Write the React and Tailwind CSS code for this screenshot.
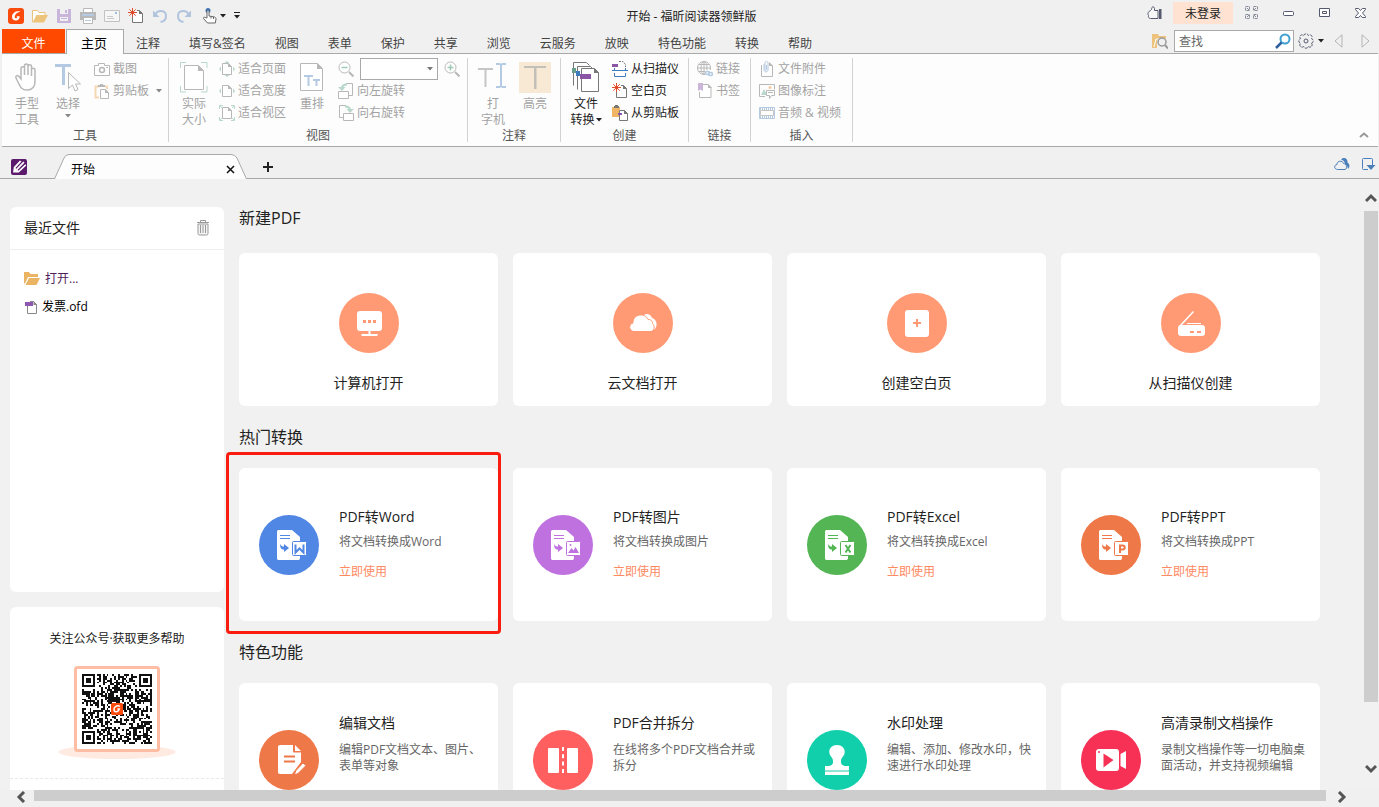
// src/App.jsx
import React from "react";

const GREY = "#b8b8b8";
const GREEN = "#b9d8cb";
const BLUE = "#b4c9e2";

function Svg({ w = 16, h = 16, children, className = "" }) {
  return (
    <svg
      width={w}
      height={h}
      viewBox={`0 0 ${w} ${h}`}
      fill="none"
      aria-hidden="true"
      className={`shrink-0 ${className}`}
    >
      {children}
    </svg>
  );
}

function Caret({ color = "#222", className = "" }) {
  return (
    <Svg w={6} h={4} className={className}>
      <path d="M0 0h6L3 3.5z" fill={color} />
    </Svg>
  );
}

/* ---------- title bar icons ---------- */

const LogoIcon = () => (
  <Svg>
    <rect width="16" height="16" rx="3" fill="#fb4a0c" />
    <path
      d="M12.6 3.6c-3.6-1.4-8.2.6-8.6 4.8-.3 3 2.2 4.4 4.6 4 1.8-.3 2.8-1.7 3.2-4.2H8.4c1 .2 1 1.9-.3 2-1.3.1-1.8-1-1.2-2.4.8-2 3-3.6 5.7-4.2z"
      fill="#fff"
    />
  </Svg>
);
const OpenIcon = () => (
  <Svg>
    <path d="M.5 14V2.5h5l1.5 2h6V7" fill="#fff" stroke="#eac27c" />
    <path d="M.5 14.5 4.5 7H16l-4 7.5z" fill="#eec47c" />
  </Svg>
);
const SaveIcon = () => (
  <Svg>
    <path d="M1 1h14v14H1z" fill="#c9b5dc" />
    <path d="M4 1h8v5H4zM4 9h8v4H4z" fill="#f0f0f0" />
    <path d="M9 2h2v3H9zM5 10h6v1H5z" fill="#c9b5dc" />
  </Svg>
);
const PrintIcon = () => (
  <Svg>
    <path d="M3.5 4V.5h9V4" stroke="#b8b8b8" fill="#fff" />
    <path d="M0 4h16v8H0z" fill="#b8b8b8" />
    <path d="M2 6h12v2H2z" fill="#b4c9e2" />
    <path d="M3.5 9.5h9v6h-9z" fill="#fff" stroke="#b8b8b8" />
    <path d="M5 12.5h6" stroke="#b4c9e2" />
  </Svg>
);
const MailIcon = () => (
  <Svg>
    <path d="M.5 2.5h15v11H.5z" fill="#f6f6f6" stroke="#c2c2c2" />
    <path d="M11 4h2v2h-2z" fill="#9fbbe0" />
    <path d="M3 8.5h6M3 10.5h7" stroke="#c9c9c9" />
  </Svg>
);
const NewIcon = () => (
  <Svg>
    <path d="M9 2.5h2.5l3 3v9h-10V9" fill="#fff" stroke="#777" />
    <path d="M11 2v4h4z" fill="#777" />
    <path d="M4.5 0v9M0 4.5h9M1.3 1.3l6.4 6.4M7.7 1.3 1.3 7.7" stroke="#dd4b2a" />
  </Svg>
);
const UndoIcon = ({ flip }) => (
  <Svg className={flip ? "-scale-x-100" : ""}>
    <path d="M3 7c2-5.5 11-5.5 11 1 0 3-2 5.5-5.5 6" stroke="#b0c4dc" strokeWidth="2" />
    <path d="M1 2.5V9h6.5z" fill="#b0c4dc" />
  </Svg>
);
const TouchIcon = () => (
  <Svg>
    <circle cx="6" cy="2.5" r="2.5" fill="#3c74b4" />
    <path
      d="M5 10V3.5c0-1.3 2-1.3 2 0V8l5.5 1c1 .3 1.5 1 1.5 2l-.7 4H5.5l-4-4.5c-.5-1 .8-1.7 1.5-1z"
      fill="#fff"
      stroke="#666"
    />
    <path d="M9 8.5v2M11.5 9v2" stroke="#666" />
  </Svg>
);
const LikeIcon = () => (
  <Svg>
    <path
      d="M11 13.5H3.5C2 13.5 1 12 1.5 10.5.5 9 1 7.5 2 6.5c1-.8 2-1 2.5-2 .3-1 0-2 1-2.5 1.3-.5 2 .5 2 1.5v2H11z"
      fill="#f7f7f7"
      stroke="#555a70"
    />
    <path d="M12 4h2.5v10H12z" fill="#555a70" />
  </Svg>
);
const GridIcon = () => (
  <Svg w={14} h={14}>
    {["M.5.5h4v4h-4z", "M8.5.5h4v4h-4z", "M.5 8.5h4v4h-4z", "M8.5 8.5h4v4h-4z"].map((d) => (
      <path key={d} d={d} stroke="#8a8d9b" strokeDasharray="3 1" />
    ))}
    <path d="m2 2 2 2m7-2L9 4M2 11l2-2m7 2L9 9" stroke="#8a8d9b" />
  </Svg>
);
const MinIcon = () => (
  <Svg w={12} h={12}>
    <rect x=".5" y="4.5" width="10" height="4" rx="1" fill="#fff" stroke="#555a70" />
  </Svg>
);
const MaxIcon = () => (
  <Svg w={12} h={12}>
    <path d="M.5 1.5h10v8H.5z" fill="#fff" stroke="#555a70" />
    <path d="M3.5 4.5h4v2h-4z" stroke="#555a70" />
  </Svg>
);
const CloseIcon = () => (
  <Svg w={12} h={12}>
    <path
      d="M.5 1.5h3.2l1.8 2 1.8-2h3.2v1l-3 3.5 3 3.5v1H7.3l-1.8-2-1.8 2H.5v-1l3-3.5-3-3.5z"
      fill="#fff"
      stroke="#555a70"
    />
  </Svg>
);

/* ---------- ribbon icons ---------- */

const HandIcon = () => (
  <Svg w={26} h={30}>
    <path
      d="M7 17V6.5c0-2.4 3.5-2.4 3.5 0V13 4c0-2.6 3.5-2.6 3.5 0v9V4.5c0-2.4 3.5-2.4 3.5 0V14 8c0-2.2 3.5-2.2 3.5 0v11c0 5-2 9-8 9-5 0-6.5-2.5-8-6l-3-6c-1-2 1.5-3.3 2.7-1.7z"
      fill="#fff"
      stroke={GREY}
      strokeWidth="1.5"
    />
  </Svg>
);
const SelectIcon = () => (
  <Svg w={26} h={30}>
    <path d="M0 2h16v3H0zM7 4h3v19H7z" fill={BLUE} />
    <path d="M13.5 10.5v16l4-3.5 2.5 6 3-1.5-2.5-5.5h5z" fill="#fff" stroke={GREY} />
  </Svg>
);
const CameraIcon = () => (
  <Svg>
    <path d="M.5 4.5h4v-2h6v2h5v10H.5z" fill="#fff" stroke={GREY} />
    <circle cx="8" cy="9" r="2.5" stroke={GREY} strokeWidth="1.5" />
    <path d="M12 6h2v1h-2z" fill={GREY} />
  </Svg>
);
const ClipIcon = () => (
  <Svg>
    <path d="M5 3.5H1.5v11H5M11 3.5h2V6" stroke="#f5d9b4" strokeWidth="2" />
    <path d="M4 4V2h2V1h3v1h2v2z" fill={GREY} />
    <path d="M6.5 6.5h5l3 3v6h-8z" fill="#fff" stroke={GREY} />
    <path d="M11 6v4h4z" fill={GREY} />
  </Svg>
);
const ActualIcon = () => (
  <Svg w={28} h={31}>
    <path d="M.5 6V.5H6M21 .5h6V6M27 24v6h-6M6 30H.5v-6" stroke={GREEN} />
    <path d="M4.5 3.5h14l5 5v19h-19z" fill="#fff" stroke={GREY} />
    <path d="M18 3v6h6z" fill={GREY} />
  </Svg>
);
const SmallPage = () => (
  <>
    <path d="M3.5 2.5h6l3 3v8h-9z" fill="#fff" stroke={GREY} />
    <path d="M9 2v4h4z" fill={GREY} />
  </>
);
const FitPageIcon = () => (
  <Svg>
    <SmallPage />
    <path d="m8 0 2.5 2h-5zM8 16l2.5-2h-5zM0 8l2-2.5v5zM16 8l-2-2.5v5z" fill={GREEN} />
  </Svg>
);
const FitWidthIcon = () => (
  <Svg>
    <SmallPage />
    <path d="m0 8 2-2.5v5zM16 8l-2-2.5v5z" fill={GREEN} />
  </Svg>
);
const FitVisibleIcon = () => (
  <Svg>
    <SmallPage />
    <path d="M.5 4V.5H4M12 .5h3.5V4M15.5 12v3.5H12M4 15.5H.5V12M1 1l2 2M15 1l-2 2M15 15l-2-2M1 15l2-2" stroke={GREEN} />
  </Svg>
);
const ReflowIcon = () => (
  <Svg w={24} h={30}>
    <path d="M.5 1.5h17l5 5v22H.5z" fill="#fff" stroke={GREY} />
    <path d="M17 1v6h6z" fill={GREY} />
    <path d="M4 13h9v2H4zM7.5 15h2v9h-2zM13 17h7v2h-7zM15.5 19h2v5h-2z" fill={BLUE} />
  </Svg>
);
const ZoomGlyph = ({ plus }) => (
  <Svg>
    <circle cx="6.5" cy="6.5" r="5.5" fill="#fff" stroke={GREY} />
    <path d="m11 11 4.5 4.5" stroke={GREY} strokeWidth="2" />
    <path d={plus ? "M3.5 6.5h6M6.5 3.5v6" : "M3.5 6.5h6"} stroke="#9fc9b7" strokeWidth="1.5" />
  </Svg>
);
const RotateIcon = ({ flip }) => (
  <Svg className={flip ? "-scale-x-100" : ""}>
    <path d="M8 .5h6.5v12H11" stroke={GREY} />
    <path d="M.5 8.5h10v7H.5z" fill="#fff" stroke={GREY} />
    <path d="M4 5c0-2.5 1.5-3.5 5-3.5" stroke={GREEN} strokeWidth="2" />
    <path d="M0 4h7.5L4 8z" fill={GREEN} />
  </Svg>
);
const TypewriterIcon = () => (
  <Svg w={30} h={30}>
    <path d="M0 6h15v2H0zM6.5 8h2v17h-2z" fill="#c6c6c6" />
    <path d="M18 1h4l1 1 1-1h4v2h-4v21h4v2h-4l-1-1-1 1h-4v-2h4V3h-4z" fill={BLUE} />
  </Svg>
);
const HighlightIcon = () => (
  <Svg w={32} h={31}>
    <path d="M0 0h32v31H0z" fill="#f7e9d4" />
    <path d="M5 4h22v2H5zM15 6h2.5v21H15z" fill="#c3c0ba" />
  </Svg>
);
const ConvertIcon = () => (
  <Svg w={28} h={31}>
    <path d="M1.5 23.5V.5h13l3 3M5.5 27.5v-23h13l3 3" fill="#fff" stroke="#777" />
    <path d="M9.5 6.5h13l4 4v19h-17z" fill="#fff" stroke="#777" />
    <path d="M22 6v5h5z" fill="#777" />
    <path d="M0 6h4v5H0z" fill="#66a08c" />
    <path d="M4 9h4v5H4z" fill="#3f7cbd" />
    <path d="M8 12h11v5H8z" fill="#8a55a5" />
  </Svg>
);
const ScannerIcon = () => (
  <Svg>
    <path d="M7 .5h4l2.5 3V6" stroke="#777" strokeDasharray="2 1" />
    <path d="M0 3h6v3H0z" fill="#8a55a5" />
    <path d="M2.5 7v2.5M13.5 7v2.5M0 9.5h16M2.5 12v3.5h11V12" stroke="#3f7cbd" />
  </Svg>
);
const FromClipIcon = () => (
  <Svg>
    <path d="M0 2h8v10H0z" fill="#f0b565" />
    <path d="M2 2V1h1V0h3v1h1v2H2z" fill="#777" />
    <path d="M7.5 5.5h5l3 3v7h-8z" fill="#fff" stroke="#777" />
    <path d="M12 5v4h4z" fill="#777" />
    <path d="M6 8h4v2H6z" fill="#8a55a5" />
  </Svg>
);
const GlobeIcon = () => (
  <Svg>
    <circle cx="7" cy="7" r="6.5" stroke={GREY} />
    <path d="M.5 7h13M7 .5v13M2 3.5h10M2 10.5h6" stroke={GREY} />
    <ellipse cx="7" cy="7" rx="3" ry="6.5" stroke={GREY} />
    <path d="M8 9h8v6.5H8z" fill="#fff" />
    <rect x="8.5" y="10.5" width="4" height="3" rx="1.5" stroke={BLUE} strokeWidth="1.5" />
    <rect x="11.5" y="11.5" width="4" height="3" rx="1.5" stroke={BLUE} strokeWidth="1.5" />
  </Svg>
);
const BookmarkIcon = () => (
  <Svg>
    <path d="M6 1.5h5l3 3v10H2.5V9" fill="#fff" stroke={GREY} />
    <path d="M11 1v4h4z" fill={GREY} />
    <path d="M1 0h5v8L3.5 6.5 1 8z" fill="#cbb6da" />
  </Svg>
);
const AttachIcon = () => (
  <Svg>
    <path d="M2.5 4v11.5h11V5l-3-3" stroke={GREY} />
    <path d="M10 1v4h4z" fill={GREY} />
    <path d="M5 3v6c0 2.5 4 2.5 4 0V2c0-2-3-2-3 0v6.5c0 1 1.5 1 1.5 0V4" stroke={BLUE} />
  </Svg>
);
const ImageNoteIcon = () => (
  <Svg>
    <path d="M.5 1.5h15v5M6 13.5H.5v-12" stroke={GREY} />
    <path d="m2 12 3-6 3 6z" fill={GREEN} />
    <circle cx="11" cy="4.5" r="1.5" fill="#f3c9a0" />
    <path d="M7.5 7.5h8v5h-3l-2 3v-3h-3z" fill="#fff" stroke={GREY} />
    <path d="M9 9.5h5" stroke={GREY} />
  </Svg>
);
const FilmIcon = () => (
  <Svg>
    <path d="M.5 2.5h15v11H.5z" stroke={BLUE} />
    <path d="M1 4h14M1 12h14" stroke={BLUE} strokeWidth="2" strokeDasharray="1 1" />
    <path d="M1.5 5.5h13v5h-13z" fill="#fff" stroke="#c6c6c6" />
  </Svg>
);
const GearIcon = () => (
  <Svg>
    <path
      d="M13.5 10.3A2 2 0 0 1 10.3 13.5 2.4 2.4 0 0 1 5.7 13.5 2 2 0 0 1 2.5 10.3 2.4 2.4 0 0 1 2.5 5.7 2 2 0 0 1 5.7 2.5 2.4 2.4 0 0 1 10.3 2.5 2 2 0 0 1 13.5 5.7 2.4 2.4 0 0 1 13.5 10.3z"
      stroke="#555a70"
      strokeDasharray="3 1"
    />
    <circle cx="8" cy="8" r="2" stroke="#555a70" />
  </Svg>
);

/* ---------- round icons of the start page ---------- */

const ComputerIcon = () => (
  <Svg w={60} h={60}>
    <rect x="18" y="18" width="25" height="20" rx="3" fill="#fff" />
    <path d="M29.5 38h2v3h7v2h-16v-2h7z" fill="#fff" />
    <path d="M24 27h3v3h-3zM29 27h3v3h-3zM34 27h3v3h-3z" fill="#ff9a74" />
  </Svg>
);
const CloudIcon = () => (
  <Svg w={60} h={60}>
    <path d="M30 22.5c3-3 8-1.5 9 2.5 4 1 6.5 6.5 3 11l-3 1z" fill="#fff" />
    <path
      d="M21 38.5c-5.5-.5-5.5-7.5-1-8.5-.5-9 12-11 15-3.5 3.5 0 4.5 2 4.5 4 3 2.5 1.5 7.5-1.5 8z"
      fill="#fff"
      stroke="#ff9a74"
    />
  </Svg>
);
const BlankIcon = () => (
  <Svg w={60} h={60}>
    <rect x="18" y="17" width="24" height="27" rx="3" fill="#fff" />
    <path d="M26 30h8M30 26v8" stroke="#ff9a74" strokeWidth="2" />
  </Svg>
);
const ScanIcon = () => (
  <Svg w={60} h={60}>
    <path d="M19 33 32.5 18.5" stroke="#fff" strokeWidth="1.5" />
    <path d="M26 30.5h14" stroke="#fff" />
    <rect x="17" y="32" width="27" height="11" rx="3" fill="#fff" />
    <path d="M29 38h4v2h-4zM36 38h4v2h-4z" fill="#ff9a74" />
  </Svg>
);

const W_MARK = "M36.5 29.5v8l4-4 4 4v-8";
const X_MARK = "m38.5 30 5 7.5m0-7.5-5 7.5";
const P_MARK = "M39 38v-7.5h2.5c3 0 3 4 0 4H39";

function DocIcon({ color, mark }) {
  return (
    <Svg w={60} h={60}>
      <path d="M20 15h13l8 7v21c0 1.500-1 2-2 2H20c-1.500 0-2-.5-2-2V17c0-1.500.5-2 2-2z" fill="#fff" />
      <path d="M21 20.500h10M21 23.500h10" stroke={color} />
      <path d="M21 29c1 2 2 2.500 4 2.500V29l5 4-5 4v-2.500c-3 0-4-2-4-5.500z" fill={color} />
      <rect x="33.5" y="26.5" width="14" height="14" rx="1" fill="#fff" stroke={color} />
      {mark ? (
        <path d={mark} stroke={color} strokeWidth="2" />
      ) : (
        <>
          <path d="m35 38 3.500-5 2 2.500 2-3.500 3.500 6z" fill={color} />
          <circle cx="37.5" cy="30" r="1" fill={color} />
        </>
      )}
    </Svg>
  );
}

const EditIcon = () => (
  <Svg w={60} h={60}>
    <path d="M21 15h13v6c0 1 .5 1.500 1.500 1.500H42V32l-9 12H21c-1.500 0-2-1-2-2V17c0-1 .5-2 2-2z" fill="#fff" />
    <path d="m36 15 6 6h-6z" fill="#fff" />
    <path d="M25 26.500h11M25 31.500h11" stroke="#ee7848" strokeWidth="2" />
    <path d="m35.500 45 1-4L44 33l3 2.500-8 8z" fill="#fff" stroke="#ee7848" />
  </Svg>
);
const MergeIcon = () => (
  <Svg w={60} h={60}>
    <rect x="15" y="18" width="11" height="25" rx="1" fill="#fff" />
    <rect x="34" y="18" width="11" height="25" rx="1" fill="#fff" />
    <path d="M30 17v26" stroke="#fff" strokeWidth="2" strokeDasharray="4 3.3" />
  </Svg>
);
const StampIcon = () => (
  <Svg w={60} h={60}>
    <path
      d="M30 15c5.500 0 8.500 4 7.500 8.500-.7 3-4 4.500-3.500 9 .2 2 1.500 3 4 3.500h4v4H18v-4h4c2.500-.5 3.800-1.500 4-3.500.5-4.500-2.800-6-3.500-9-1-4.500 2-8.500 7.500-8.500z"
      fill="#fff"
    />
    <path d="M18 40h24v2H18z" fill="#8fe5d2" />
    <path d="M18 42h24v3H18z" fill="#fff" />
  </Svg>
);
const VideoIcon = () => (
  <Svg w={60} h={60}>
    <rect x="15" y="19" width="23" height="22" rx="3" fill="#fff" />
    <path d="m39.500 24 5.500-3v18l-5.500-3z" fill="#fff" />
    <path d="m22.500 23.500 10 6.500-10 7.500z" fill="#f73056" />
    <circle cx="18" cy="22" r="1" fill="#f73056" />
  </Svg>
);

/* ---------- data ---------- */

const MENU = ["注释", "填写&签名", "视图", "表单", "保护", "共享", "浏览", "云服务", "放映", "特色功能", "转换", "帮助"];

const QUICK = [
  ["打开", OpenIcon],
  ["保存", SaveIcon],
  ["打印", PrintIcon],
  ["邮件", MailIcon],
  ["新建", NewIcon],
  ["撤销", UndoIcon],
];

const CREATE = [
  ["计算机打开", ComputerIcon],
  ["云文档打开", CloudIcon],
  ["创建空白页", BlankIcon],
  ["从扫描仪创建", ScanIcon],
];

const CONVERT = [
  { title: "PDF转Word", desc: "将文档转换成Word", color: "#5086e4", bg: "bg-[#5086e4]", mark: W_MARK, marked: true },
  { title: "PDF转图片", desc: "将文档转换成图片", color: "#bf72df", bg: "bg-[#bf72df]" },
  { title: "PDF转Excel", desc: "将文档转换成Excel", color: "#53b553", bg: "bg-[#53b553]", mark: X_MARK },
  { title: "PDF转PPT", desc: "将文档转换成PPT", color: "#ee7848", bg: "bg-[#ee7848]", mark: P_MARK },
];

const FEATURES = [
  { title: "编辑文档", desc: "编辑PDF文档文本、图片、表单等对象", bg: "bg-[#ee7848]", Icon: EditIcon },
  { title: "PDF合并拆分", desc: "在线将多个PDF文档合并或拆分", bg: "bg-[#ff5f5f]", Icon: MergeIcon },
  { title: "水印处理", desc: "编辑、添加、修改水印，快速进行水印处理", bg: "bg-[#12cfab]", Icon: StampIcon },
  { title: "高清录制文档操作", desc: "录制文档操作等一切电脑桌面活动，并支持视频编辑", bg: "bg-[#f73056]", Icon: VideoIcon },
];

/* ---------- title bar and menu ---------- */

function TitleBar() {
  return (
    <header className="grid h-[29px] grid-cols-[1fr_auto_1fr] items-center">
      <div className="flex items-center gap-2 pl-2 pt-0.5">
        <LogoIcon />
        {QUICK.map(([label, Icon]) => (
          <button key={label} aria-label={label}>
            <Icon />
          </button>
        ))}
        <button aria-label="重做">
          <UndoIcon flip />
        </button>
        <button aria-label="触摸模式" className="ml-0.5 flex items-center gap-0.5">
          <TouchIcon />
          <Caret />
        </button>
        <button aria-label="自定义工具栏">
          <Svg w={6} h={8}>
            <path d="M0 .5h6" stroke="#222" />
            <path d="M0 3h6L3 6.5z" fill="#222" />
          </Svg>
        </button>
      </div>
      <h1 className="pl-1 pt-1 text-xs text-[#222]">开始 - 福昕阅读器领鲜版</h1>
      <div className="flex items-center justify-end pb-1 pr-3">
        <button aria-label="点赞" className="mr-2.5"><LikeIcon /></button>
        <button className="mr-3 h-[22px] w-[60px] bg-[#ffe2d2] pt-0.5 text-xs text-[#222]">未登录</button>
        <button aria-label="皮肤" className="mr-6"><GridIcon /></button>
        <button aria-label="最小化" className="mr-6"><MinIcon /></button>
        <button aria-label="最大化" className="mr-6"><MaxIcon /></button>
        <button aria-label="关闭"><CloseIcon /></button>
      </div>
    </header>
  );
}

function MenuBar() {
  return (
    <nav className="ml-0.5 mr-px flex h-[25px] border-b border-[#a9a9a9] text-xs text-[#444]">
      <button className="w-[63px] bg-[#ff4900] pt-1.5 text-white">文件</button>
      <button className="-mb-px ml-px w-[58px] border border-b-0 border-[#a9a9a9] bg-[#fdfdfd] pr-0.5 pt-1 text-[13px] text-black">
        主页
      </button>
      <div className="-ml-0.5 flex gap-px">
        {MENU.map((m) => (
          <button key={m} className="px-3.5 pt-1.5">
            {m}
          </button>
        ))}
      </div>
      <div className="ml-auto flex items-center pr-2">
        <button aria-label="搜索文件夹" className="mr-1.5">
          <Svg>
            <path d="M0 1h6l1 2h7v4H5v8H0z" fill="#ecc27c" />
            <path d="M2 14 4 6h10" stroke="#fff" />
            <circle cx="10" cy="9" r="4" fill="#f0f0f0" stroke="#999" strokeWidth="1.5" />
            <path d="m13 12 3 3.5" stroke="#999" strokeWidth="2" />
          </Svg>
        </button>
        <label className="flex h-[22px] w-[120px] items-center border border-[#a9a9a9] bg-white pl-1 pr-0.5">
          <input
            aria-label="查找"
            placeholder="查找"
            className="min-w-0 flex-1 pt-0.5 outline-none placeholder:text-[#666]"
          />
          <Svg>
            <circle cx="10" cy="6" r="4.5" fill="#fff" stroke="#3ea0cf" strokeWidth="2" />
            <path d="M6.5 9.5 1 15" stroke="#2f5f9f" strokeWidth="2.5" />
          </Svg>
        </label>
        <button aria-label="设置" className="ml-1 flex items-center gap-1">
          <GearIcon />
          <Caret />
        </button>
        <button aria-label="上一个" className="ml-2.5">
          <Svg w={9} h={14}><path d="M8 .8v12.4L1 7z" stroke="#b5b5b5" /></Svg>
        </button>
        <button aria-label="下一个" className="ml-[18px]">
          <Svg w={9} h={14}><path d="M1 .8v12.4L8 7z" stroke="#b5b5b5" /></Svg>
        </button>
      </div>
    </nav>
  );
}

/* ---------- ribbon ---------- */

function Group({ label, className, body, children }) {
  return (
    <section className={`flex flex-col border-r border-[#d2d2d2] ${className}`}>
      <div className={`flex h-[70px] shrink-0 items-start ${body}`}>{children}</div>
      <h2 className="text-center text-xs leading-4 text-[#555]">{label}</h2>
    </section>
  );
}

function BigButton({ icon, lines, className, arrow }) {
  return (
    <button className={`flex shrink-0 flex-col items-center text-xs leading-4 ${className}`}>
      <span className="flex h-[38px] items-center">{icon}</span>
      {lines.map((l, i) => (
        <span key={l} className="flex items-center gap-px whitespace-nowrap">
          {l}
          {arrow && i === lines.length - 1 && <Caret />}
        </span>
      ))}
    </button>
  );
}

function SmallButton({ icon, label, arrow }) {
  return (
    <button className="flex h-[22px] items-center gap-[3px] whitespace-nowrap text-xs">
      {icon}
      {label}
      {arrow && <Caret color="#888" className="ml-1" />}
    </button>
  );
}

function Ribbon() {
  return (
    <div className="ml-0.5 mr-px flex h-[93px] border-b border-[#a9a9a9] bg-[#fdfdfd] py-1 text-[#a3a3a3]">
      <Group label="工具" className="w-[167px]" body="pl-[7px]">
        <BigButton className="w-9" icon={<HandIcon />} lines={["手型", "工具"]} />
        <div className="flex w-[46px] flex-col items-center">
          <BigButton className="w-full" icon={<SelectIcon />} lines={["选择"]} />
          <Caret color="#888" className="mt-0.5" />
        </div>
        <div className="ml-[3px]">
          <SmallButton icon={<CameraIcon />} label="截图" />
          <SmallButton icon={<ClipIcon />} label="剪贴板" arrow />
        </div>
      </Group>
      <Group label="视图" className="w-[299px]" body="pl-[7px]">
        <BigButton className="w-9" icon={<ActualIcon />} lines={["实际", "大小"]} />
        <div className="ml-[7px]">
          <SmallButton icon={<FitPageIcon />} label="适合页面" />
          <SmallButton icon={<FitWidthIcon />} label="适合宽度" />
          <SmallButton icon={<FitVisibleIcon />} label="适合视区" />
        </div>
        <BigButton className="ml-2 w-9" icon={<ReflowIcon />} lines={["重排"]} />
        <div className="ml-2">
          <div className="flex h-[22px] items-center">
            <button aria-label="缩小"><ZoomGlyph /></button>
            <div className="mx-1.5 flex h-[22px] w-[78px] items-center border border-[#a9a9a9] bg-white pr-1">
              <input aria-label="缩放比例" className="min-w-0 flex-1 outline-none" />
              <Caret color="#777" />
            </div>
            <button aria-label="放大"><ZoomGlyph plus /></button>
          </div>
          <SmallButton icon={<RotateIcon />} label="向左旋转" />
          <SmallButton icon={<RotateIcon flip />} label="向右旋转" />
        </div>
      </Group>
      <Group label="注释" className="w-[93px]" body="pl-[7px]">
        <BigButton className="w-9" icon={<TypewriterIcon />} lines={["打", "字机"]} />
        <BigButton className="ml-1.5 w-9" icon={<HighlightIcon />} lines={["高亮"]} />
      </Group>
      <Group label="创建" className="w-[128px]" body="pl-[5px] text-[#222]">
        <BigButton className="w-10" icon={<ConvertIcon />} lines={["文件", "转换"]} arrow />
        <div className="ml-1.5">
          <SmallButton icon={<ScannerIcon />} label="从扫描仪" />
          <SmallButton icon={<NewIcon />} label="空白页" />
          <SmallButton icon={<FromClipIcon />} label="从剪贴板" />
        </div>
      </Group>
      <Group label="链接" className="w-[62px]" body="pl-2">
        <div>
          <SmallButton icon={<GlobeIcon />} label="链接" />
          <SmallButton icon={<BookmarkIcon />} label="书签" />
        </div>
      </Group>
      <Group label="插入" className="w-[102px]" body="pl-2">
        <div>
          <SmallButton icon={<AttachIcon />} label="文件附件" />
          <SmallButton icon={<ImageNoteIcon />} label="图像标注" />
          <SmallButton icon={<FilmIcon />} label="音频 & 视频" />
        </div>
      </Group>
      <button aria-label="折叠功能区" className="ml-auto mr-[9px] self-end pb-1">
        <Svg w={10} h={6}><path d="m1 5 4-3.500L9 5" stroke="#999" strokeWidth="2" /></Svg>
      </button>
    </div>
  );
}

function DocTabs() {
  return (
    <div className="flex h-8 items-end border-b border-[#a9a9a9] pl-[11px] pr-[3px]">
      <button aria-label="编辑器" className="mb-[3px]">
        <Svg>
          <rect width="16" height="16" rx="2" fill="#5b1a6b" />
          <path d="m2 13.500.8-5.500L9 1.500l1.500 1L4.500 9l.8.8 7-7.300 1.200 1.200-7 7.300.8.8 7-6.500 1 1.200-7.500 7z" fill="#fff" />
        </Svg>
      </button>
      <div className="relative -mb-px ml-[27px] flex h-[25px] w-[193px] items-center">
        <svg
          className="absolute inset-0 h-full w-full"
          viewBox="0 0 193 25"
          preserveAspectRatio="none"
          fill="#fdfdfd"
          aria-hidden="true"
        >
          <path d="M.5 25 10 4Q11.500.5 15 .5h162q4 0 6 3.500L192.500 25" stroke="#a9a9a9" />
        </svg>
        <button className="relative flex-1 pl-[17px] pt-1.5 text-left text-xs text-black">开始</button>
        <button aria-label="关闭标签" className="relative mr-3 pt-1.5">
          <Svg w={9} h={9}><path d="m1 1 7 7m0-7L1 8" stroke="#111" strokeWidth="1.5" /></Svg>
        </button>
      </div>
      <button aria-label="新标签" className="mb-[5px] ml-[15px]">
        <Svg w={12} h={12}><path d="M6 1v10M1 6h10" stroke="#222" strokeWidth="2" /></Svg>
      </button>
      <div className="mb-[5px] ml-auto flex gap-3">
        <button aria-label="云">
          <Svg>
            <path d="M7 2.500c4-3.500 7 0 6.500 3 2.500 1.500 2.500 4.500.5 6.500-.5-2.500-1-4-3-4.500C11 5 9.500 3 7 2.500z" fill="#4a7fba" />
            <path d="M3.500 12.500C-.3 12-.2 8 3 7.500 3 3.500 8.500 3 9.500 6.500c3 0 4.500 5 1.500 6z" fill="#f0f0f0" stroke="#4a7fba" />
          </Svg>
        </button>
        <button aria-label="面板">
          <Svg w={14} h={16}>
            <path d="M6 12.500H1.500q-1 0-1-1v-9q0-1 1-1h8q1 0 1 1V8" stroke="#4a7fba" />
            <path d="M4.500 8h9L9 13z" fill="#4a7fba" />
          </Svg>
        </button>
      </div>
    </div>
  );
}

/* ---------- sidebar ---------- */

// 37x37 modules: three finders, one alignment mark, hashed noise elsewhere
function qrPath() {
  const n = 37;
  const ring = (r, c, r0, c0, s) => {
    const d = Math.max(Math.abs(r - r0), Math.abs(c - c0));
    return d <= s ? (s === 4 ? d === 3 || d <= 1 : d !== 1) : null;
  };
  let seed = 20;
  let d = "";
  for (let r = 0; r < n; r++) {
    for (let c = 0; c < n; c++) {
      seed = (seed * 1103515245 + 12345) % 2147483648;
      let on = seed / 2147483648 < 0.52;
      const marks = [ring(r, c, 3, 3, 4), ring(r, c, 3, 33, 4), ring(r, c, 33, 3, 4), ring(r, c, 30, 30, 2)];
      marks.forEach((m) => {
        if (m !== null) on = m;
      });
      if (on) d += `M${c} ${r}h1v1h-1z`;
    }
  }
  return d;
}

function Sidebar() {
  return (
    <aside className="flex w-[214px] shrink-0 flex-col gap-[15px] text-xs">
      <section className="min-h-0 flex-1 rounded-md bg-white">
        <div className="flex h-[43px] items-center justify-between border-b border-[#eee] px-3.5">
          <h2 className="text-sm text-[#222]">最近文件</h2>
          <button aria-label="清空" className="pb-0.5">
            <Svg w={14} h={17}>
              <path d="M1 3.500h12M4.500 3V1.500h5V3" stroke="#999" />
              <path d="M2 5v9.500q0 1.500 1.500 1.500h7q1.500 0 1.500-1.500V5z" fill="#f3f3f3" stroke="#999" />
              <path d="M4.500 6v8M7 6v8M9.500 6v8" stroke="#999" />
            </Svg>
          </button>
        </div>
        <ul className="px-3.5 pt-[18px] text-black">
          <li>
            <a href="#open" className="flex h-[22px] items-center gap-[5px] text-[#4f2158]">
              <Svg>
                <path d="M0 1h5l1.500 2H14v3H4l-3 6.500H0z" fill="#ebb462" />
                <path d="M1.500 14 5 7h11l-3.500 7z" fill="#ebb462" />
              </Svg>
              打开...
            </a>
          </li>
          <li className="mt-1.5">
            <a href="#invoice" className="flex h-[22px] items-center gap-0.5">
              <Svg>
                <path d="M3.500 7v7.500h9v-9l-3-3H6" stroke="#888" />
                <path d="M9.500 2v4H13z" fill="#888" />
                <path d="M1 3h8v4H1z" fill="#9055b0" />
              </Svg>
              发票.ofd
            </a>
          </li>
        </ul>
      </section>
      <section className="flex flex-col items-center rounded-t-md bg-white pt-6">
        <p className="leading-4 text-[#222]">关注公众号·获取更多帮助</p>
        <svg width="118" height="93" viewBox="0 0 118 93" className="mt-[19px]" role="img" aria-label="二维码">
          <ellipse cx="59" cy="86" rx="58.5" ry="7" fill="#ffeae2" />
          <rect x="17.5" y="1.5" width="83" height="83" rx="2" fill="#fff" stroke="#ffbda4" strokeWidth="3" />
          <svg x="24" y="8" width="70" height="70" viewBox="0 0 37 37" shapeRendering="crispEdges">
            <path d={qrPath()} fill="#111" />
          </svg>
          <svg x="53" y="37" width="12" height="12" viewBox="0 0 16 16">
            <rect width="16" height="16" rx="2" fill="#fb4a0c" />
            <path d="M12 4.500C8 2.500 4 5 4 8.500s5 5 7-.5H8.500" stroke="#fff" strokeWidth="2" fill="none" />
          </svg>
        </svg>
        <div className="mt-[19px] h-3 w-full border-t border-dashed border-[#e8e8e8]" />
      </section>
    </aside>
  );
}

/* ---------- start page ---------- */

function Disc({ bg, children }) {
  return <span className={`size-[60px] shrink-0 overflow-hidden rounded-full ${bg}`}>{children}</span>;
}

function StartPage() {
  return (
    <main className="min-w-0 flex-1 pr-11 text-[#222]">
      <h2 className="mt-px text-base leading-5">新建PDF</h2>
      <div className="mt-[25px] grid grid-cols-4 gap-[15px]">
        {CREATE.map(([label, Icon]) => (
          <button key={label} className="flex h-[153px] flex-col items-center rounded-md bg-white pt-10 text-sm">
            <Disc bg="bg-[#ff9a74]">
              <Icon />
            </Disc>
            <span className="mt-5">{label}</span>
          </button>
        ))}
      </div>

      <h2 className="my-[21px] text-base leading-5">热门转换</h2>
      <div className="grid grid-cols-4 gap-[15px]">
        {CONVERT.map((c) => (
          <article key={c.title} className="relative flex h-[153px] gap-5 rounded-md bg-white pl-5">
            <div className="flex items-center">
              <Disc bg={c.bg}>
                <DocIcon color={c.color} mark={c.mark} />
              </Disc>
            </div>
            <div className="pt-[39px] text-xs leading-4">
              <h3 className="text-sm">{c.title}</h3>
              <p className="mt-[7px] text-[#666]">{c.desc}</p>
              <a href="#use" className="mt-3.5 block text-[#ff8a62]">
                立即使用
              </a>
            </div>
            {c.marked && (
              <div className="pointer-events-none absolute -bottom-[13px] -left-[13px] -right-[3px] -top-4 rounded-sm border-3 border-[#fb1c10]" />
            )}
          </article>
        ))}
      </div>

      <h2 className="my-[21px] text-base leading-5">特色功能</h2>
      <div className="grid grid-cols-4 gap-[15px]">
        {FEATURES.map(({ title, desc, bg, Icon }) => (
          <article key={title} className="flex h-[153px] gap-5 rounded-md bg-white pl-5 pr-3">
            <div className="flex items-center">
              <Disc bg={bg}>
                <Icon />
              </Disc>
            </div>
            <div className="min-w-0 flex-1 pt-[30px] text-xs leading-4">
              <h3 className="text-sm">{title}</h3>
              <p className="mt-[9px] leading-4 text-[#666]">{desc}</p>
            </div>
          </article>
        ))}
      </div>
    </main>
  );
}

function Arrow({ d, label }) {
  return (
    <button aria-label={label} className="flex size-[14px] items-center justify-center">
      <Svg w={12} h={12}><path d={d} stroke="#555" strokeWidth="3" /></Svg>
    </button>
  );
}

export default function App() {
  return (
    <div
      lang="zh-CN"
      className="flex h-screen flex-col overflow-hidden bg-[#f0f0f0] font-['Open_Sans','Noto_Sans_CJK_SC',sans-serif]"
    >
      <TitleBar />
      <MenuBar />
      <Ribbon />
      <DocTabs />
      <div className="flex min-h-0 flex-1 bg-[#f1f1f1] pl-2.5 pr-px">
        <div className="flex min-w-0 flex-1 gap-[15px] overflow-hidden pt-7">
          <Sidebar />
          <StartPage />
        </div>
        <div className="flex w-[14px] flex-col items-center pb-[14px] pt-3">
          <Arrow label="向上滚动" d="m1 9 5-5 5 5" />
          <div className="mt-1.5 w-full grow-[490] bg-[#cdcdcd]" />
          <div className="grow-[60]" />
          <Arrow label="向下滚动" d="m1 3 5 5 5-5" />
        </div>
      </div>
      <div className="flex h-[17px] items-start bg-[#f0f0f0] pl-[14px] pr-[30px]">
        <Arrow label="向左滚动" d="M9 1 4 6l5 5" />
        <div className="ml-1.5 mr-[9px] h-[11px] flex-1 bg-[#cdcdcd]" />
        <Arrow label="向右滚动" d="m3 1 5 5-5 5" />
      </div>
    </div>
  );
}
